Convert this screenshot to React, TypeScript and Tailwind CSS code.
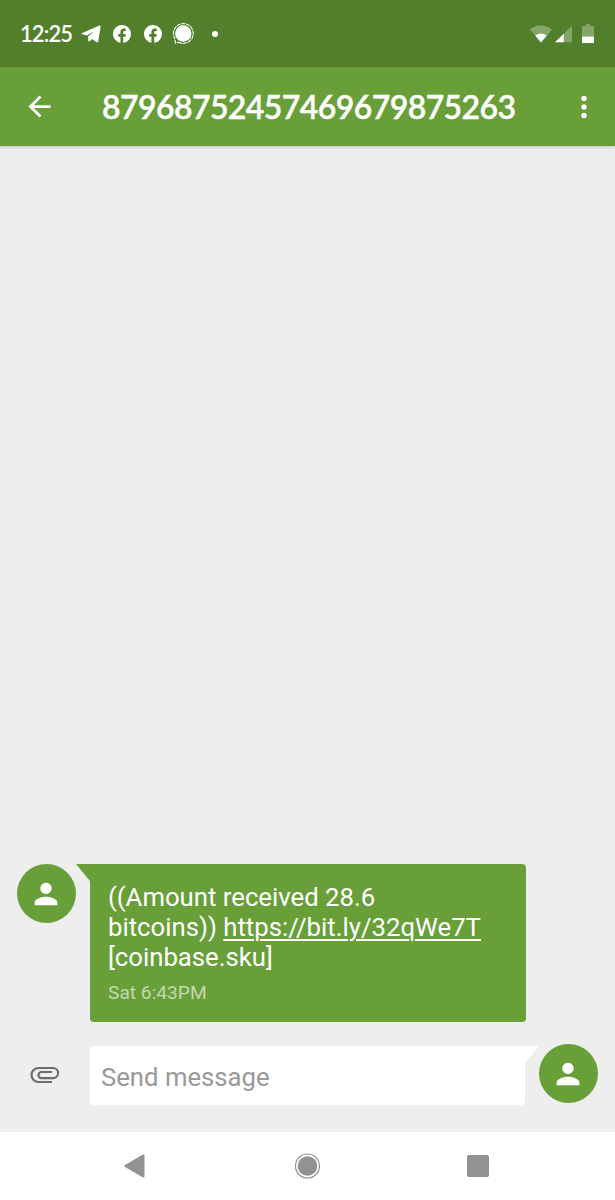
import { MdPerson, MdArrowBack, MdMoreVert } from 'react-icons/md';

function TelegramIcon() {
  return (
    <svg width="20" height="18" viewBox="0 0 20 18" className="fill-white">
      <path d="M.8 8.200 17.800.7c1.100-.5 2 .3 1.800 1.400L17.300 16c-.2 1.200-1.200 1.600-2.200.9l-3.900-2.900-2.600 2.200c-.5.4-1.200.2-1.300-.5l-.3-4.200 6.200-5.300-7.600 4.400L.8 9.100c-.6-.2-.6-.7 0-.9z" />
    </svg>
  );
}

function FacebookIcon() {
  return (
    <svg width="18" height="18" viewBox="0 0 24 24" className="fill-white">
      <path d="M24 12a12 12 0 1 0-14.100 11.800v-8.300H6.900V12h3V9.400c0-3 1.800-4.700 4.500-4.700 1.300 0 2.700.2 2.700.2v3h-1.500c-1.500 0-2 .9-2 1.900V12h3.400l-.5 3.500h-2.900v8.300A12 12 0 0 0 24 12z" />
    </svg>
  );
}

function SignalChatIcon() {
  return (
    <svg width="22" height="22" viewBox="0 0 22 22" fill="none">
      <circle cx="11.300" cy="10.500" r="8.200" fill="white" />
      <path
        d="M6.600 19.200A9.900 9.900 0 1 0 2.600 15.200L3.600 20.200z"
        stroke="white"
        strokeWidth="1.100"
        strokeDasharray="4 .8"
      />
    </svg>
  );
}

function StatusBar() {
  return (
    <div className="flex h-[67px] shrink-0 items-center bg-[#527f2c] pl-5 pr-[21px] text-white">
      <span className="w-[61px] font-['Lato'] text-[22px] font-semibold leading-none tracking-[-0.9px]">12:25</span>
      <TelegramIcon />
      <div className="ml-3 flex gap-[13px]">
        <FacebookIcon />
        <FacebookIcon />
      </div>
      <div className="ml-2.5">
        <SignalChatIcon />
      </div>
      <span className="ml-[18px] size-1.5 rounded-full bg-white" />
      <div className="ml-auto flex items-center">
        <svg width="22" height="18" viewBox="0 0 22 18" className="fill-white">
          <path opacity=".3" d="M0 4.500C6-.8 16-.8 22 4.500L11 17.500z" />
          <path d="M5.200 10.600C8.500 8 13.500 8 16.800 10.600L11 17.500z" />
        </svg>
        <svg width="17" height="18" viewBox="0 0 17 18" className="ml-[3px] fill-white">
          <path opacity=".3" d="M0 17.200 17 .7v16.500z" />
          <path d="M0 17.200 8.800 8.700v8.500z" />
        </svg>
        <svg width="12" height="20" viewBox="0 0 12 20" className="ml-2.5 fill-white">
          <path opacity=".3" d="M4 0h4v2h3q1 0 1 1v9.500H0V3q0-1 1-1h3z" />
          <path d="M0 12.500h12v5.500q0 1-1 1H1q-1 0-1-1z" />
        </svg>
      </div>
    </div>
  );
}

function Header() {
  return (
    <div className="z-10 flex h-[79px] shrink-0 items-center bg-[#689f38] pl-[23px] pr-[14px] text-white shadow-[0_1px_3px_rgba(0,0,0,0.2)]">
      <MdArrowBack className="size-[33px]" />
      <h1 className="ml-[46px] whitespace-nowrap font-['Lato'] text-[32px] font-semibold leading-none tracking-[-0.58px] [-webkit-text-stroke:0.4px_white]">
        87968752457469679875263
      </h1>
      <MdMoreVert className="ml-auto size-[34px]" />
    </div>
  );
}

function Avatar() {
  return (
    <div className="flex size-[59px] shrink-0 items-center justify-center rounded-full bg-[#689f38]">
      <MdPerson className="mr-px size-[34px] text-white" />
    </div>
  );
}

function Message() {
  return (
    <div className="mt-auto flex items-start pl-[17px]">
      <Avatar />
      <svg width="14" height="17" viewBox="0 0 14 17" className="fill-[#689f38]">
        <path d="M0 0h14v17z" />
      </svg>
      <div className="h-[158px] w-[436px] rounded-[4px] rounded-tl-none bg-[#689f38] pl-[18px] pt-[18px] text-white">
        <p className="text-[25.730px] leading-[30px]">
          ((Amount received 28.6
          <br />
          bitcoins)) <span className="underline decoration-[1.500px] underline-offset-[3px]">https://bit.ly/32qWe7T</span>
          <br />
          [coinbase.sku]
        </p>
        <p className="mt-[9px] text-[19.200px] leading-6 text-[#c3d9af]">Sat 6:43PM</p>
      </div>
    </div>
  );
}

function Composer() {
  return (
    <div className="mt-[22px] flex items-start pb-[27px] pl-[30px]">
      <svg width="30" height="18" viewBox="0 0 30 18" fill="none" className="mt-[22px] stroke-[#6d6d6d] stroke-[2.200]">
        <path d="M22 16H8.500A7 7 0 0 1 8.500 2H23a5.100 5.100 0 0 1 0 10.200H11.500a3.100 3.100 0 0 1 0-6.200H22" />
      </svg>
      <div className="ml-[30px] mt-0.5 flex h-[59px] w-[435px] items-center rounded-[4px] rounded-tr-none bg-white pl-[11px] pt-[3px] text-[25.700px] text-[#999]">
        Send message
      </div>
      <svg width="14" height="17" viewBox="0 0 14 17" className="mt-0.5 fill-white">
        <path d="M0 0h14L0 17z" />
      </svg>
      <Avatar />
    </div>
  );
}

function NavBar() {
  return (
    <div className="flex h-[68px] shrink-0 items-center bg-white pl-[124px]">
      <svg width="21" height="24" viewBox="0 0 21 24" className="fill-[#929292]">
        <path d="M1 11 18.500.8Q20.500 0 20.500 2v20q0 2-2 1.200L1 13q-1.300-1 0-2z" />
      </svg>
      <svg width="26" height="26" viewBox="0 0 26 26" fill="none" className="ml-[149px]">
        <circle cx="13.500" cy="13" r="12" stroke="#929292" strokeWidth="1.200" />
        <circle cx="13.500" cy="13" r="9.800" fill="#929292" />
      </svg>
      <div className="ml-[147px] size-[22px] rounded-[2px] bg-[#929292]" />
    </div>
  );
}

export default function App() {
  return (
    <div className="flex h-[1200px] w-[615px] flex-col overflow-hidden bg-[#eeeeee] font-['Roboto',sans-serif]">
      <StatusBar />
      <Header />
      <main className="flex flex-1 flex-col">
        <Message />
        <Composer />
      </main>
      <NavBar />
    </div>
  );
}
